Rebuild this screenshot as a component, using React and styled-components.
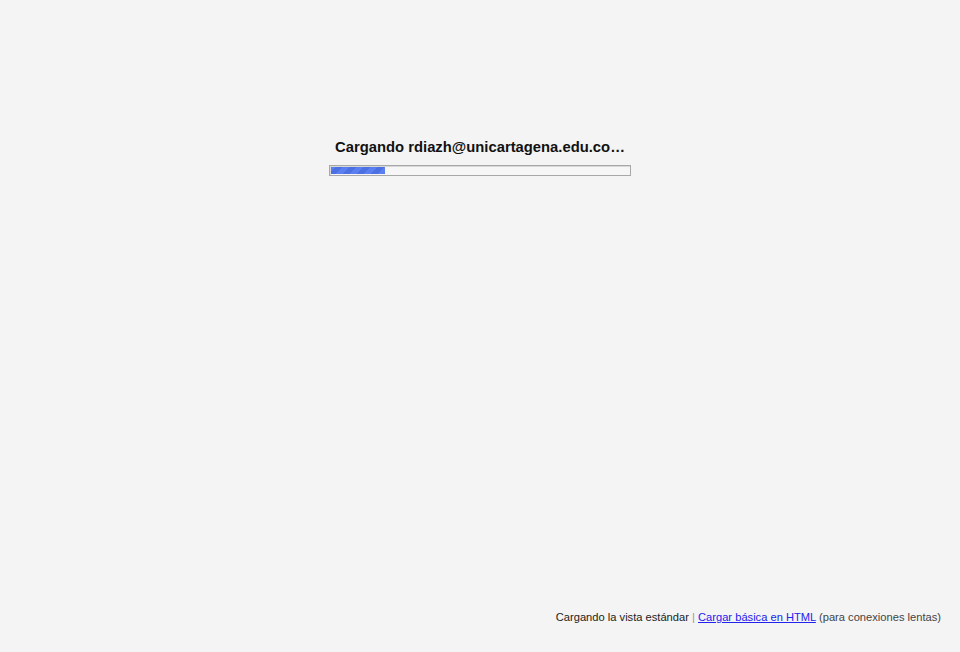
import React from "react";
import styled, { createGlobalStyle } from "styled-components";

const Global = createGlobalStyle`
  html, body { margin: 0; padding: 0; background: #f4f4f4; }
  body { font-family: "Liberation Sans", Arial, sans-serif; }
`;

const Page = styled.div`
  min-height: 100vh;
  display: flex;
  flex-direction: column;
  box-sizing: border-box;
`;

const Loading = styled.div`
  display: flex;
  flex-direction: column;
  align-items: center;
  padding-top: 138px;
`;

const Title = styled.div`
  font-size: 14.8px;
  font-weight: bold;
  color: #111;
  line-height: 19px;
  margin-bottom: 8px;
`;

const Track = styled.div`
  width: 298px;
  height: 7px;
  border: 1px solid #a8a8a8;
  padding: 1px;
  background: #f6f6f6;
  box-shadow: inset 1px 1px 0 #d8d8d8;
`;

const Fill = styled.div`
  height: 100%;
  background: repeating-linear-gradient(
    -45deg,
    #5a7ff0 0px,
    #5a7ff0 5px,
    #4d6fe4 5px,
    #4d6fe4 10px
  );
`;

const Footer = styled.div`
  margin-top: auto;
  display: flex;
  justify-content: flex-end;
  padding: 0 19px 28px 0;
  font-size: 11.15px;
  line-height: 14px;
  color: #222;
`;

const Sep = styled.span`
  color: #999;
`;

const Link = styled.a`
  color: #2222ee;
  text-decoration: underline;
  cursor: pointer;
`;

const Note = styled.span`
  color: #444;
`;

export default function App() {
  return (
    <Page>
      <Global />
      <Loading>
        <Title>Cargando rdiazh@unicartagena.edu.co…</Title>
        <Track>
          <Fill style={{ width: "18%" }} />
        </Track>
      </Loading>
      <Footer>
        <span>
          Cargando la vista estándar <Sep>|</Sep> <Link>Cargar básica en HTML</Link> <Note>(para conexiones lentas)</Note>
        </span>
      </Footer>
    </Page>
  );
}
